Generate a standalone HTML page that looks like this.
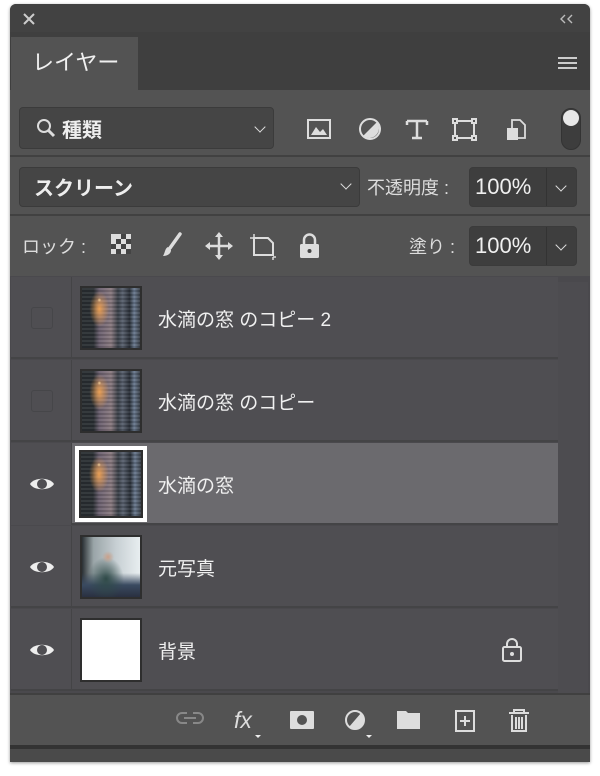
<!DOCTYPE html>
<html><head><meta charset="utf-8"><style>
*{margin:0;padding:0;box-sizing:border-box}
body{width:600px;height:776px;background:#fff;position:relative;overflow:hidden;font-family:"Liberation Sans","Noto Sans CJK JP",sans-serif;color:#e6e6e6}
.a{position:absolute}
.panel{left:10px;top:4px;width:580px;height:758px;background:#535353;border-radius:6px 6px 0 0;overflow:hidden;box-shadow:0 1px 3px rgba(0,0,0,.4)}
.box{background:#454545;border:1px solid #3b3b3b;border-radius:4px}
.chev{width:8px;height:8px;border-right:1.6px solid #ddd;border-bottom:1.6px solid #ddd;transform:rotate(45deg)}
.row{left:1px;width:547px;height:82px;background:#4f4e52;border-bottom:2px solid #444446}
.eyecol{left:0;top:0;width:61px;height:82px;border-right:1px solid #444446}
.thumb{left:69px;top:9px;width:62px;height:64px;border:2px solid #2e2e2e;overflow:hidden}
.img{width:100%;height:100%;background:
 radial-gradient(circle 2px at 30% 20%,rgba(255,220,160,.8),rgba(0,0,0,0)),
 radial-gradient(ellipse 10px 18px at 30% 35%,rgba(255,170,80,.85),rgba(255,140,60,0) 100%),
 repeating-linear-gradient(0deg,rgba(0,0,0,.12) 0 2px,rgba(255,255,255,.05) 2px 4px),
 linear-gradient(90deg,#2a2f33 0,#2a2f33 20%,#6b6070 30%,#8a7a80 50%,#3a4048 62%,#5a6270 70%,#2a3038 82%,#6a7a90 90%,#3a4048 100%);}
.name{left:147px;top:28px;font-size:19px;color:#f0f0f0}
.eye{left:18px;top:32px}
.cb{left:20px;top:30px;width:22px;height:22px;border:1px solid #464649;border-radius:3px}
</style></head><body>
<div class="a panel">
 <div class="a" style="left:0;top:0;width:580px;height:28px;background:#424242"></div>
 <svg class="a" style="left:12px;top:8px" width="14" height="14"><path d="M2 2L12 12M12 2L2 12" stroke="#ccc" stroke-width="2"/></svg>
 <svg class="a" style="left:550px;top:10px" width="14" height="10"><path d="M5 1L1 5L5 9M12 1L8 5L12 9" stroke="#bbb" stroke-width="1.4" fill="none"/></svg>
 <div class="a" style="left:0;top:28px;width:580px;height:58px;background:#3f3f3f"></div>
 <div class="a" style="left:1px;top:33px;width:127px;height:55px;background:#535353"></div>
 <div class="a" style="left:22px;top:41px;font-size:22px;color:#f0f0f0">レイヤー</div>
 <div class="a" style="left:548px;top:53px;width:19px;height:12px;border-top:2px solid #ccc;border-bottom:2px solid #ccc"></div>
 <div class="a" style="left:548px;top:58px;width:19px;height:2px;background:#ccc"></div>
 <div class="a box" style="left:9px;top:103px;width:255px;height:42px"></div>
 <svg class="a" style="left:26px;top:114px" width="22" height="22"><circle cx="8" cy="8" r="6" stroke="#ddd" stroke-width="2" fill="none"/><line x1="12" y1="12" x2="18" y2="18" stroke="#ddd" stroke-width="3"/></svg>
 <div class="a" style="left:52px;top:110px;font-size:20px;font-weight:bold;color:#eee">種類</div>
 <div class="a chev" style="left:246px;top:119px"></div>
 <svg class="a" style="left:296px;top:112px" width="300" height="36" fill="none" stroke="#ddd" stroke-width="2">
  <rect x="2" y="4" width="22" height="18"/><path d="M5 19l5-8 4 5 3-3 4 6z" fill="#ddd" stroke="none"/>
  <circle cx="64" cy="13" r="10"/><path d="M71 6A10 10 0 0 1 57 20z" fill="#ddd" stroke="none"/>
  <path d="M101 5h20M111 5v17M106 22h10M101 5v4M121 5v4" stroke-width="2.5"/>
  <rect x="149" y="5" width="19" height="17"/><rect x="147" y="3" width="4" height="4" fill="#535353"/><rect x="166" y="3" width="4" height="4" fill="#535353"/><rect x="147" y="20" width="4" height="4" fill="#535353"/><rect x="166" y="20" width="4" height="4" fill="#535353"/>
  <path d="M206 4h8l5 5v13h-13z" stroke-width="1.8"/><rect x="201" y="12" width="11" height="12" fill="#ddd" stroke="none"/>
 </svg>
 <div class="a" style="left:551px;top:104px;width:20px;height:42px;border-radius:10px;background:#3d3d3d;border:1px solid #333"></div>
 <div class="a" style="left:553px;top:106px;width:16px;height:16px;border-radius:8px;background:#e8e8e8"></div>
 <div class="a" style="left:0;top:151px;width:580px;height:2px;background:#414141"></div>
 <div class="a box" style="left:9px;top:163px;width:341px;height:40px"></div>
 <div class="a" style="left:24px;top:168px;font-size:20px;font-weight:bold;color:#eee">スクリーン</div>
 <div class="a chev" style="left:332px;top:176px"></div>
 <div class="a" style="left:357px;top:170px;font-size:18px;color:#ddd">不透明度 :</div>
 <div class="a box" style="left:459px;top:163px;width:108px;height:40px;background:#3e3e3e"></div>
 <div class="a" style="left:536px;top:164px;width:1px;height:38px;background:#333"></div>
 <div class="a" style="left:465px;top:170px;font-size:22px;color:#f0f0f0">100%</div>
 <div class="a chev" style="left:547px;top:178px"></div>
 <div class="a" style="left:0;top:210px;width:580px;height:2px;background:#414141"></div>
 <div class="a" style="left:12px;top:229px;font-size:18px;color:#ddd">ロック :</div>
 <svg class="a" style="left:100px;top:228px" width="220" height="30">
  <rect x="1" y="2" width="20" height="20" fill="#ddd"/><rect x="6" y="7" width="5" height="5" fill="#444"/><rect x="11" y="12" width="5" height="5" fill="#444"/><rect x="1" y="12" width="5" height="5" fill="#444"/><rect x="11" y="2" width="5" height="5" fill="#444"/><rect x="16" y="7" width="5" height="5" fill="#444"/><rect x="6" y="17" width="5" height="5" fill="#444"/><rect x="16" y="17" width="5" height="5" fill="#444"/>
  <path d="M70 2L60 16" stroke="#ddd" stroke-width="3.5" stroke-linecap="round"/><path d="M58 15c-3 1-3 6-5 9 4 0 8-2 8-6z" fill="#ddd"/>
  <path d="M109 3v22M98 14h22" stroke="#ddd" stroke-width="2.5"/><path d="M109 0l-4 5h8zM109 28l-4-5h8zM95 14l5-4v8zM123 14l-5-4v8z" fill="#ddd"/>
  <path d="M144 6h14l5 5v12h-19z" fill="none" stroke="#ddd" stroke-width="2"/><path d="M140 6h3M163 25h3M144 2v3M163 25v3" stroke="#ddd" stroke-width="1.5"/>
  <rect x="190" y="12" width="19" height="14" rx="1.5" fill="#ddd"/><path d="M194 12v-4a5.5 5.5 0 0 1 11 0v4" fill="none" stroke="#ddd" stroke-width="2.5"/><circle cx="199.5" cy="19" r="2" fill="#444"/>
 </svg>
 <div class="a" style="left:399px;top:229px;font-size:18px;color:#ddd">塗り :</div>
 <div class="a box" style="left:459px;top:222px;width:108px;height:40px;background:#3e3e3e"></div>
 <div class="a" style="left:536px;top:223px;width:1px;height:38px;background:#333"></div>
 <div class="a" style="left:465px;top:229px;font-size:22px;color:#f0f0f0">100%</div>
 <div class="a chev" style="left:547px;top:237px"></div>
 <div class="a" style="left:0;top:272px;width:580px;height:417px;background:#4a494d"></div>
 <div class="a" style="left:548px;top:278px;width:30px;height:411px;background:#4d4c50"></div>
 <div class="a row" style="top:273px"><div class="a eyecol"></div><div class="a cb"></div><div class="a thumb"><div class="img"></div></div><div class="a name">水滴の窓 のコピー 2</div></div>
 <div class="a row" style="top:356px"><div class="a eyecol"></div><div class="a cb"></div><div class="a thumb"><div class="img"></div></div><div class="a name">水滴の窓 のコピー</div></div>
 <div class="a row" style="top:439px;background:#6b6a6e"><div class="a eyecol" style="background:#4f4e52"></div>
  <svg class="a eye" width="26" height="18"><path d="M1 9C5 2 21 2 25 9C21 16 5 16 1 9z" fill="#eee"/><circle cx="13" cy="9" r="5" fill="#4f4e52"/></svg>
  <div class="a" style="left:64px;top:3px;width:72px;height:76px;background:#fff"></div>
  <div class="a thumb" style="left:68px;top:7px;width:64px;height:68px"><div class="img"></div></div><div class="a name">水滴の窓</div></div>
 <div class="a row" style="top:522px"><div class="a eyecol"></div>
  <svg class="a eye" width="26" height="18"><path d="M1 9C5 2 21 2 25 9C21 16 5 16 1 9z" fill="#eee"/><circle cx="13" cy="9" r="5" fill="#4f4e52"/></svg>
  <div class="a thumb"><div style="width:100%;height:100%;background:radial-gradient(circle 6px at 26px 20px,#c9a08a,rgba(0,0,0,0) 100%),radial-gradient(ellipse 18px 22px at 24px 42px,#2f4a48,rgba(0,0,0,0) 100%),linear-gradient(180deg,rgba(0,0,0,0) 60%,#3a4a60 80%,#2a3040),linear-gradient(90deg,#2a3034 0,#9aa5a8 20%,#c8d0d4 60%,#e8eef0)"></div></div><div class="a name">元写真</div></div>
 <div class="a row" style="top:605px"><div class="a eyecol"></div>
  <svg class="a eye" width="26" height="18"><path d="M1 9C5 2 21 2 25 9C21 16 5 16 1 9z" fill="#eee"/><circle cx="13" cy="9" r="5" fill="#4f4e52"/></svg>
  <div class="a thumb" style="background:#fff"></div><div class="a name">背景</div>
  <svg class="a" style="left:490px;top:28px" width="22" height="26"><rect x="2" y="10" width="18" height="14" rx="1.5" fill="none" stroke="#ddd" stroke-width="2"/><path d="M6 10v-3a5 5 0 0 1 10 0v3" fill="none" stroke="#ddd" stroke-width="2"/><circle cx="11" cy="17" r="2" fill="#ddd"/></svg>
 </div>
 <div class="a" style="left:0;top:689px;width:580px;height:2px;background:#404040"></div>
 <svg class="a" style="left:162px;top:700px" width="370" height="40" fill="none">
  <path d="M15 9h-5a5 5 0 0 0 0 10h5M21 9h5a5 5 0 0 1 0 10h-5M12 14h12" stroke="#888" stroke-width="2"/>
  <text x="62" y="24" font-family="Liberation Sans" font-style="italic" font-size="23" fill="#ddd">fx</text><path d="M83 31h6l-3 3z" fill="#eee"/>
  <rect x="118" y="7" width="24" height="18" rx="1" fill="#ddd"/><circle cx="130" cy="16" r="5" fill="#535353"/>
  <circle cx="183" cy="16" r="9" stroke="#ddd" stroke-width="2"/><path d="M189 9A9 9 0 0 1 177 23z" fill="#ddd"/><path d="M194 31h6l-3 3z" fill="#eee"/>
  <path d="M225 7h9l2 2h12v16h-23z" fill="#ddd"/>
  <rect x="284" y="7" width="18" height="20" stroke="#ddd" stroke-width="2"/><path d="M293 12v10M288 17h10" stroke="#ddd" stroke-width="2"/>
  <path d="M337 9h20M342 9v-3h10v3M340 11v16h14v-16M344 13v12M347 13v12M350 13v12" stroke="#ddd" stroke-width="2"/>
 </svg>
 <div class="a" style="left:0;top:741px;width:580px;height:4px;background:#333"></div>
 <div class="a" style="left:0;top:745px;width:580px;height:13px;background:#4a4a4a"></div>
</div>
</body></html>
